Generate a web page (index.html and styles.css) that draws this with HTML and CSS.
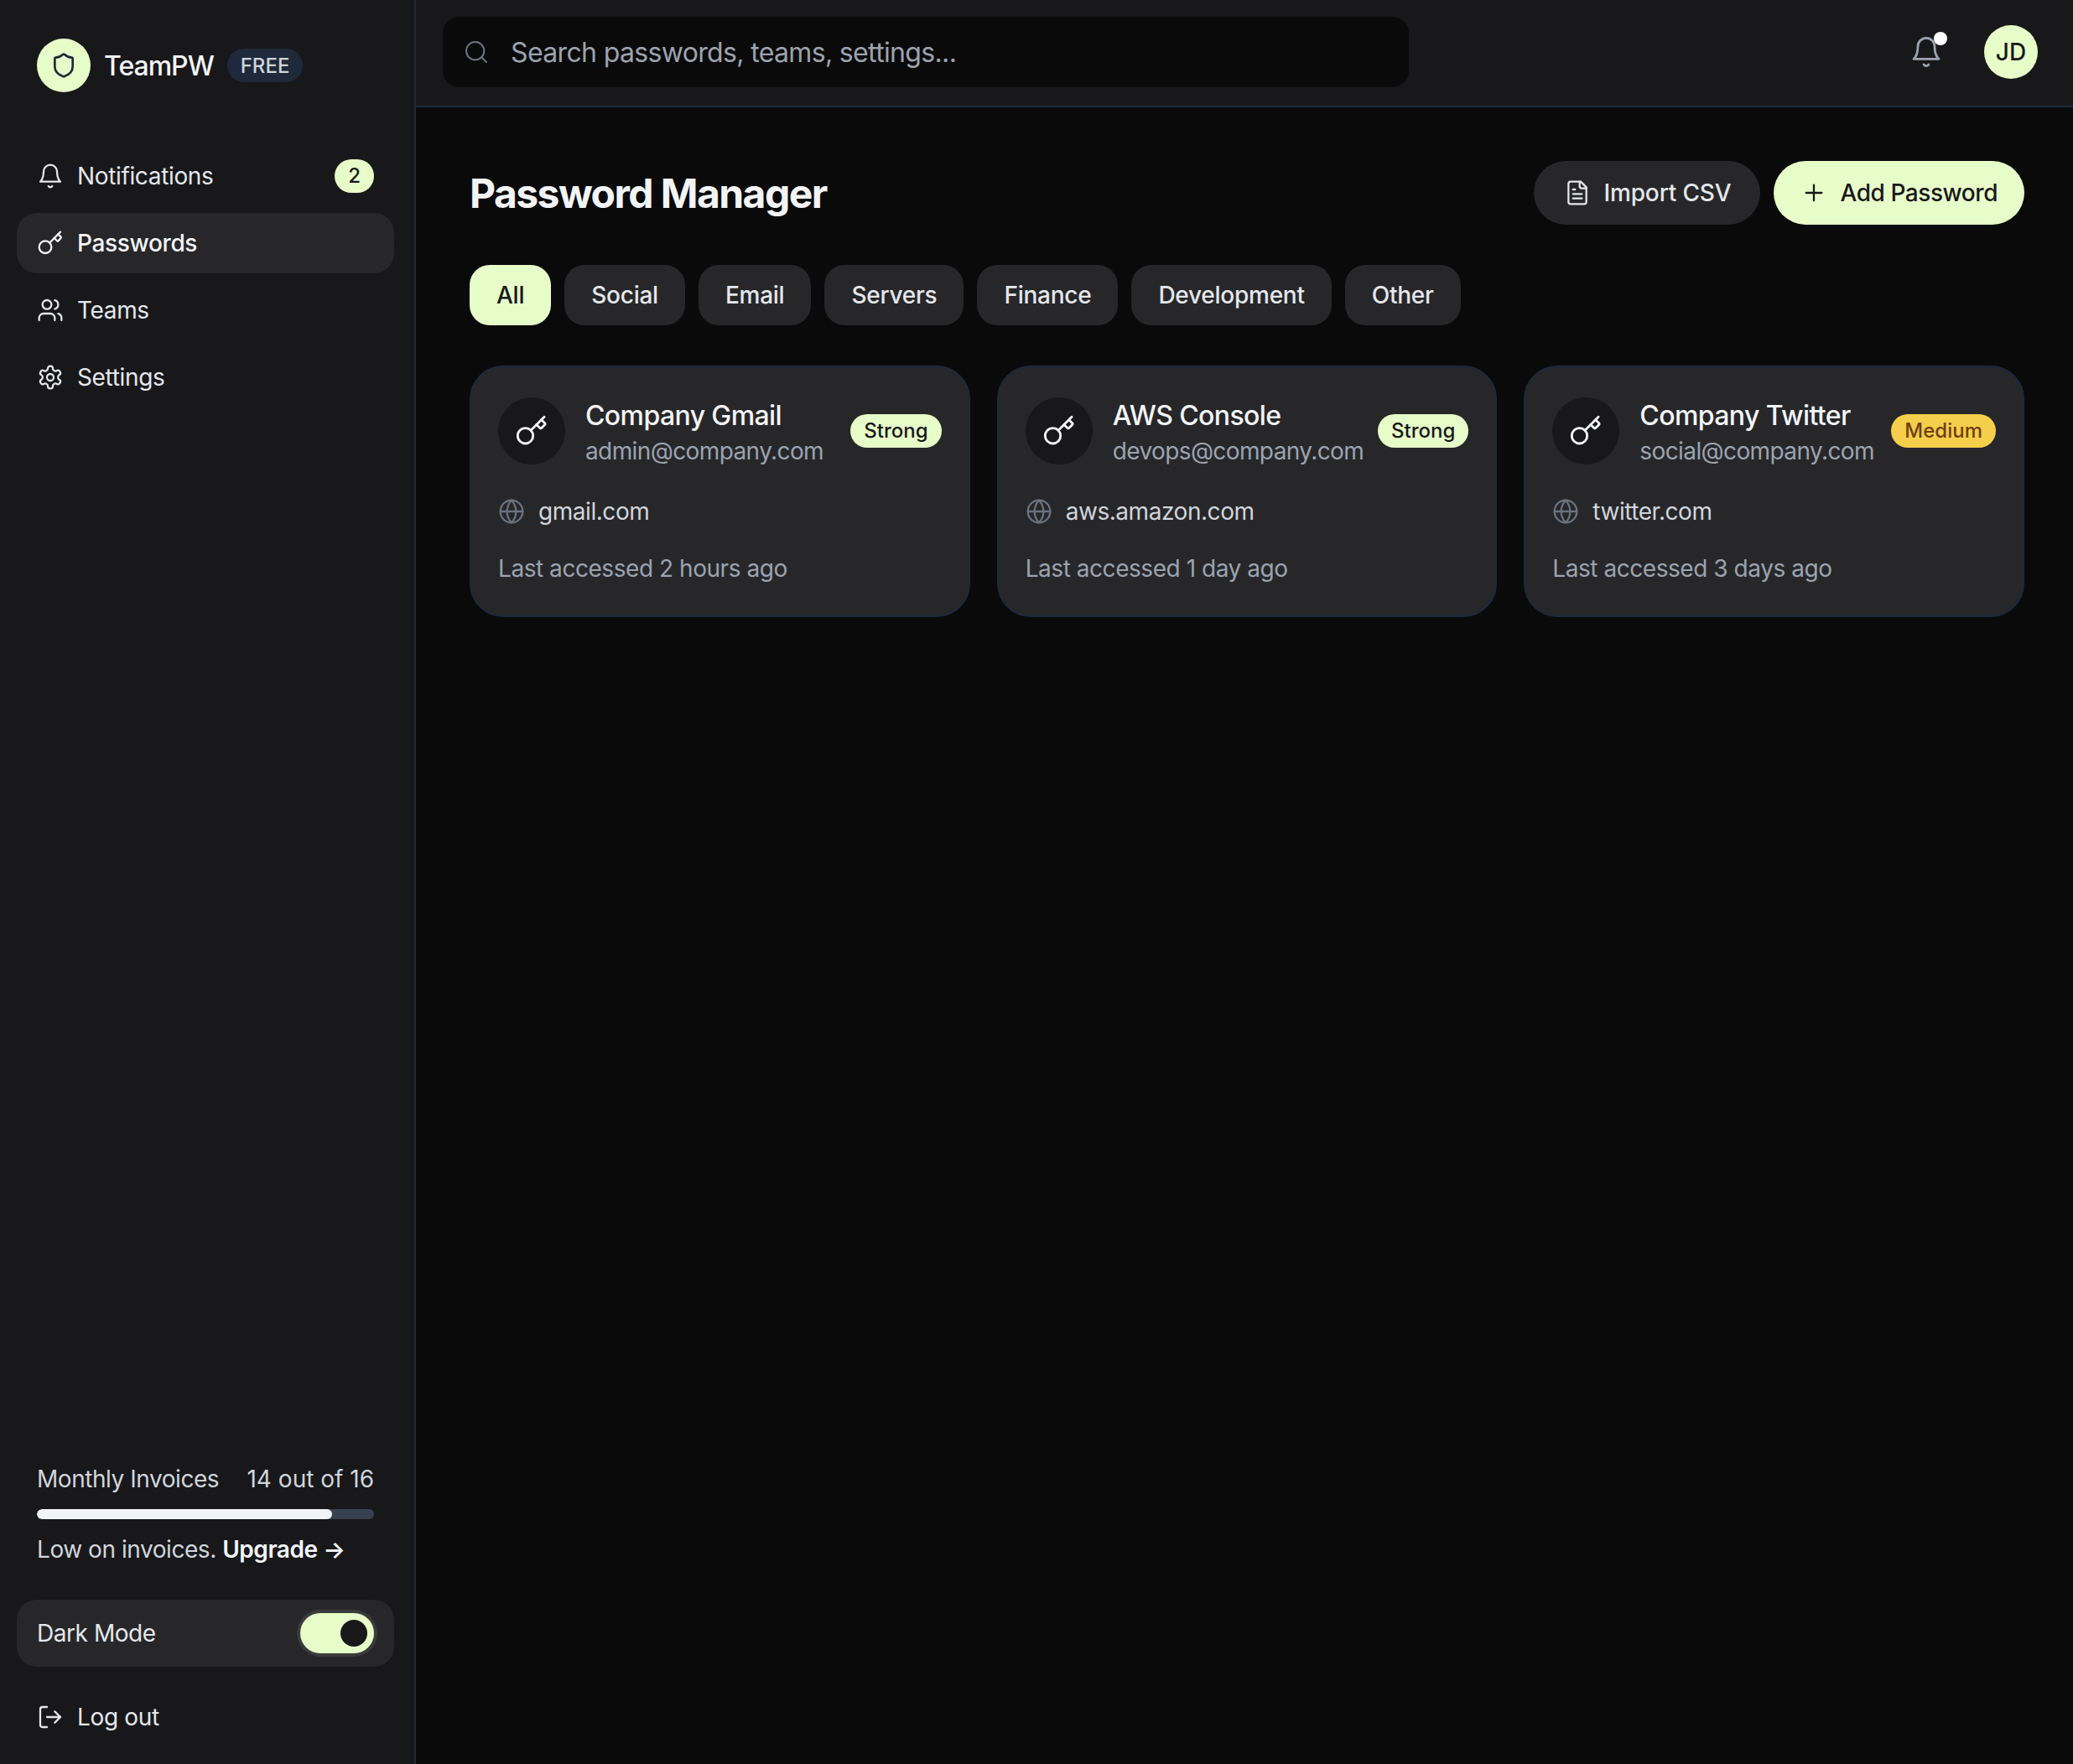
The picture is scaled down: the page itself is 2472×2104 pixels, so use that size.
FILE: index.html
```html
<!DOCTYPE html>
<html lang="en">
<head>
  <meta charset="UTF-8" />
  <title>TeamPW - Password Manager</title>
  <link rel="stylesheet" href="styles.css">
</head>
<body>
  <svg class="sprite" xmlns="http://www.w3.org/2000/svg">
    <symbol id="i-shield" viewBox="0 0 24 24"><path d="M20 13c0 5-3.5 7.5-7.66 8.95a1 1 0 0 1-.67-.01C7.5 20.5 4 18 4 13V6a1 1 0 0 1 1-1c2 0 4.5-1.2 6.24-2.72a1.17 1.17 0 0 1 1.52 0C14.51 3.81 17 5 19 5a1 1 0 0 1 1 1z"/></symbol>
    <symbol id="i-bell" viewBox="0 0 24 24"><path d="M6 8a6 6 0 0 1 12 0c0 7 3 9 3 9H3s3-2 3-9"/><path d="M10.3 21a1.94 1.94 0 0 0 3.4 0"/></symbol>
    <symbol id="i-key" viewBox="0 0 24 24"><path d="m15.5 7.5 2.3 2.3a1 1 0 0 0 1.4 0l2.1-2.1a1 1 0 0 0 0-1.4L19 4"/><path d="m21 2-9.6 9.6"/><circle cx="7.5" cy="15.5" r="5.5"/></symbol>
    <symbol id="i-users" viewBox="0 0 24 24"><path d="M16 21v-2a4 4 0 0 0-4-4H6a4 4 0 0 0-4 4v2"/><circle cx="9" cy="7" r="4"/><path d="M22 21v-2a4 4 0 0 0-3-3.87"/><path d="M16 3.13a4 4 0 0 1 0 7.75"/></symbol>
    <symbol id="i-gear" viewBox="0 0 24 24"><path d="M12.22 2h-.44a2 2 0 0 0-2 2v.18a2 2 0 0 1-1 1.73l-.43.25a2 2 0 0 1-2 0l-.15-.08a2 2 0 0 0-2.73.73l-.22.38a2 2 0 0 0 .73 2.73l.15.1a2 2 0 0 1 1 1.72v.51a2 2 0 0 1-1 1.74l-.15.09a2 2 0 0 0-.73 2.73l.22.38a2 2 0 0 0 2.73.73l.15-.08a2 2 0 0 1 2 0l.43.25a2 2 0 0 1 1 1.73V20a2 2 0 0 0 2 2h.44a2 2 0 0 0 2-2v-.18a2 2 0 0 1 1-1.73l.43-.25a2 2 0 0 1 2 0l.15.08a2 2 0 0 0 2.73-.73l.22-.39a2 2 0 0 0-.73-2.73l-.15-.08a2 2 0 0 1-1-1.74v-.5a2 2 0 0 1 1-1.74l.15-.09a2 2 0 0 0 .73-2.73l-.22-.38a2 2 0 0 0-2.73-.73l-.15.08a2 2 0 0 1-2 0l-.43-.25a2 2 0 0 1-1-1.73V4a2 2 0 0 0-2-2z"/><circle cx="12" cy="12" r="3"/></symbol>
    <symbol id="i-logout" viewBox="0 0 24 24"><path d="M9 21H5a2 2 0 0 1-2-2V5a2 2 0 0 1 2-2h4"/><path d="m16 17 5-5-5-5"/><path d="M21 12H9"/></symbol>
    <symbol id="i-search" viewBox="0 0 24 24"><circle cx="11" cy="11" r="8"/><path d="m21 21-4.3-4.3"/></symbol>
    <symbol id="i-file" viewBox="0 0 24 24"><path d="M15 2H6a2 2 0 0 0-2 2v16a2 2 0 0 0 2 2h12a2 2 0 0 0 2-2V7Z"/><path d="M14 2v4a2 2 0 0 0 2 2h4"/><path d="M10 9H8"/><path d="M16 13H8"/><path d="M16 17H8"/></symbol>
    <symbol id="i-plus" viewBox="0 0 24 24"><path d="M5 12h14"/><path d="M12 5v14"/></symbol>
    <symbol id="i-globe" viewBox="0 0 24 24"><circle cx="12" cy="12" r="10"/><path d="M12 2a14.5 14.5 0 0 0 0 20 14.5 14.5 0 0 0 0-20"/><path d="M2 12h20"/></symbol>
  </svg>

  <div class="app">
    <aside class="sidebar">
      <div class="brand">
        <div class="brand-logo"><svg class="icon"><use href="#i-shield"/></svg></div>
        <span class="brand-name">TeamPW</span>
        <span class="brand-plan">FREE</span>
      </div>

      <nav class="nav">
        <a class="nav-item"><svg class="icon"><use href="#i-bell"/></svg><span>Notifications</span><span class="nav-count">2</span></a>
        <a class="nav-item active"><svg class="icon"><use href="#i-key"/></svg><span>Passwords</span></a>
        <a class="nav-item"><svg class="icon"><use href="#i-users"/></svg><span>Teams</span></a>
        <a class="nav-item"><svg class="icon"><use href="#i-gear"/></svg><span>Settings</span></a>
      </nav>

      <div class="sidebar-bottom">
        <div class="usage">
          <div class="usage-head"><span>Monthly Invoices</span><span class="usage-count">14 out of 16</span></div>
          <div class="usage-track"><div class="usage-fill" style="width: 87.5%"></div></div>
          <p class="usage-note">Low on invoices. <strong>Upgrade →</strong></p>
        </div>

        <div class="theme-row">
          <span>Dark Mode</span>
          <div class="toggle"><div class="toggle-knob"></div></div>
        </div>

        <a class="nav-item logout"><svg class="icon"><use href="#i-logout"/></svg><span>Log out</span></a>
      </div>
    </aside>

    <div class="main">
      <header class="topbar">
        <label class="search">
          <svg class="icon"><use href="#i-search"/></svg>
          <input type="text" placeholder="Search passwords, teams, settings..." />
        </label>
        <div class="topbar-right">
          <div class="bell"><svg class="icon"><use href="#i-bell"/></svg><span class="bell-dot"></span></div>
          <div class="avatar">JD</div>
        </div>
      </header>

      <main class="content">
        <div class="page-head">
          <h1>Password Manager</h1>
          <div class="page-actions">
            <button class="btn btn-dark"><svg class="icon"><use href="#i-file"/></svg>Import CSV</button>
            <button class="btn btn-lime"><svg class="icon"><use href="#i-plus"/></svg>Add Password</button>
          </div>
        </div>

        <div class="filters">
          <button class="chip active">All</button>
          <button class="chip">Social</button>
          <button class="chip">Email</button>
          <button class="chip">Servers</button>
          <button class="chip">Finance</button>
          <button class="chip">Development</button>
          <button class="chip">Other</button>
        </div>

        <div class="cards">
          <article class="card">
            <div class="card-head">
              <div class="card-key"><svg class="icon"><use href="#i-key"/></svg></div>
              <div class="card-title">
                <h3>Company Gmail</h3>
                <p>admin@company.com</p>
              </div>
              <span class="strength strong">Strong</span>
            </div>
            <div class="card-site"><svg class="icon"><use href="#i-globe"/></svg><span>gmail.com</span></div>
            <p class="card-time">Last accessed 2 hours ago</p>
          </article>

          <article class="card">
            <div class="card-head">
              <div class="card-key"><svg class="icon"><use href="#i-key"/></svg></div>
              <div class="card-title">
                <h3>AWS Console</h3>
                <p>devops@company.com</p>
              </div>
              <span class="strength strong">Strong</span>
            </div>
            <div class="card-site"><svg class="icon"><use href="#i-globe"/></svg><span>aws.amazon.com</span></div>
            <p class="card-time">Last accessed 1 day ago</p>
          </article>

          <article class="card">
            <div class="card-head">
              <div class="card-key"><svg class="icon"><use href="#i-key"/></svg></div>
              <div class="card-title">
                <h3>Company Twitter</h3>
                <p>social@company.com</p>
              </div>
              <span class="strength medium">Medium</span>
            </div>
            <div class="card-site"><svg class="icon"><use href="#i-globe"/></svg><span>twitter.com</span></div>
            <p class="card-time">Last accessed 3 days ago</p>
          </article>
        </div>
      </main>
    </div>
  </div>
</body>
</html>
```

FILE: styles.css
```css
* {
  box-sizing: border-box;
}

body {
  margin: 0;
  font-family: Inter, 'Noto Sans', sans-serif;
  font-size: 28px;
  line-height: 40px;
  letter-spacing: -0.45px;
  background-color: #0a0a0a;
  color: #e5e7eb;
}

.sprite {
  display: none;
}

.icon {
  width: 32px;
  height: 32px;
  flex-shrink: 0;
  fill: none;
  stroke: currentColor;
  stroke-width: 1.7;
  stroke-linecap: round;
  stroke-linejoin: round;
}

.app {
  display: flex;
  height: 2104px;
}

/* sidebar */
.sidebar {
  width: 496px;
  flex-shrink: 0;
  display: flex;
  flex-direction: column;
  padding: 46px 24px 20px 20px;
  background-color: #18181b;
  border-right: 2px solid #1e293b;
}

.brand {
  display: flex;
  align-items: center;
  gap: 16px;
  padding-left: 24px;
  margin-bottom: 64px;
}

.brand-logo {
  width: 64px;
  height: 64px;
  border-radius: 50%;
  background-color: #e7fdc9;
  color: #1e293b;
  display: flex;
  align-items: center;
  justify-content: center;
}

.brand-logo .icon {
  stroke-width: 2;
}

.brand-name {
  font-size: 32px;
  line-height: 42px;
  padding-top: 2px;
  font-weight: 500;
  letter-spacing: -1px;
  color: #f3f4f6;
}

.brand-plan {
  height: 40px;
  line-height: 41px;
  padding: 0 16px;
  border-radius: 20px;
  background-color: #1e293b;
  color: #d1d5db;
  font-size: 24px;
  font-weight: 500;
  letter-spacing: 0;
}

.nav {
  display: flex;
  flex-direction: column;
  gap: 8px;
}

.nav-item {
  display: flex;
  align-items: center;
  gap: 16px;
  height: 72px;
  padding: 0 24px;
  border-radius: 24px;
  color: #e5e7eb;
  letter-spacing: -0.35px;
}

.nav-item.active {
  background-color: #27272a;
  color: #f3f4f6;
  font-weight: 500;
}

.nav-count {
  margin-left: auto;
  width: 47px;
  height: 40px;
  line-height: 40px;
  border-radius: 20px;
  text-align: center;
  background-color: #e7fdc9;
  color: #18181b;
  font-size: 24px;
  font-weight: 500;
}

.sidebar-bottom {
  margin-top: auto;
}

.usage {
  padding: 0 24px;
}

.usage-head {
  display: flex;
  justify-content: space-between;
  color: #d1d5db;
}

.usage-count {
  letter-spacing: 0;
}

.usage-track {
  height: 12px;
  margin-top: 16px;
  border-radius: 6px;
  background-color: #374151;
  overflow: hidden;
}

.usage-fill {
  height: 100%;
  border-radius: 6px;
  background-color: #f3f4f6;
}

.usage-note {
  margin: 16px 0 0;
  color: #d1d5db;
}

.usage-note strong {
  font-weight: 600;
  color: #f3f4f6;
}

.theme-row {
  display: flex;
  align-items: center;
  justify-content: space-between;
  height: 80px;
  margin-top: 40px;
  padding: 0 24px;
  border-radius: 24px;
  background-color: #27272a;
}

.toggle {
  width: 88px;
  height: 48px;
  padding: 8px;
  border-radius: 24px;
  background-color: #e7fdc9;
  box-shadow: 0 0 0 4px #3a3a3d;
  display: flex;
  justify-content: flex-end;
}

.toggle-knob {
  width: 32px;
  height: 32px;
  border-radius: 50%;
  background-color: #18181b;
}

.logout {
  margin-top: 24px;
}

/* topbar */
.main {
  flex: 1;
  min-width: 0;
  display: flex;
  flex-direction: column;
}

.topbar {
  height: 128px;
  display: flex;
  align-items: center;
  justify-content: space-between;
  padding: 20px 42px 22px 32px;
  background-color: #18181b;
  border-bottom: 2px solid #1e293b;
}

.search {
  width: 1152px;
  height: 84px;
  display: flex;
  align-items: center;
  gap: 24px;
  padding: 0 24px;
  border-radius: 20px;
  background-color: #0a0a0a;
  color: #6b7280;
}

.search .icon {
  stroke-width: 1.5;
}

.search input {
  flex: 1;
  border: none;
  outline: none;
  padding: 0 0 0 1px;
  background: transparent;
  font-family: inherit;
  font-size: 32px;
  letter-spacing: -0.65px;
  color: #e5e7eb;
}

.search input::placeholder {
  color: #9ca3af;
  opacity: 1;
}

.topbar-right {
  display: flex;
  align-items: center;
  gap: 49px;
}

.bell {
  position: relative;
  width: 40px;
  height: 40px;
  color: #9ca3af;
}

.bell .icon {
  display: block;
  width: 40px;
  height: 40px;
}

.bell-dot {
  position: absolute;
  top: -4px;
  right: -5px;
  width: 16px;
  height: 16px;
  border-radius: 50%;
  background-color: #fff;
}

.avatar {
  width: 64px;
  height: 64px;
  border-radius: 50%;
  background-color: #e7fdc9;
  color: #18181b;
  font-weight: 500;
  letter-spacing: 0;
  display: flex;
  align-items: center;
  justify-content: center;
}

/* content */
.content {
  flex: 1;
  padding: 64px 58px 64px 64px;
}

.page-head {
  display: flex;
  align-items: center;
  justify-content: space-between;
  margin-bottom: 48px;
}

h1 {
  margin: 0;
  font-size: 48px;
  line-height: 64px;
  padding-top: 2px;
  font-weight: 700;
  letter-spacing: -1.55px;
  color: #f3f4f6;
}

.page-actions {
  display: flex;
  gap: 16px;
}

button {
  border: none;
  font-family: inherit;
  font-size: 28px;
  font-weight: 500;
  letter-spacing: -0.25px;
  cursor: pointer;
}

.btn {
  height: 76px;
  display: flex;
  align-items: center;
  gap: 16px;
  padding: 0 32px;
  border-radius: 38px;
}

.btn-dark {
  padding: 0 34px 0 36px;
  background-color: #27272a;
  color: #e5e7eb;
  letter-spacing: -0.15px;
}

.btn-lime {
  background-color: #e7fdc9;
  color: #18181b;
  letter-spacing: -0.45px;
}

.filters {
  display: flex;
  gap: 16px;
  margin-bottom: 48px;
}

.chip {
  height: 72px;
  padding: 0 32px;
  border-radius: 24px;
  background-color: #27272a;
  color: #e5e7eb;
}

.chip.active {
  background-color: #e7fdc9;
  color: #18181b;
}

.cards {
  display: grid;
  grid-template-columns: repeat(3, minmax(0, 1fr));
  gap: 32px;
}

.card {
  height: 300px;
  padding: 32px;
  border: 2px solid #1e293b;
  border-radius: 40px;
  background-color: #27272a;
}

.card-head {
  display: flex;
  align-items: center;
  gap: 24px;
}

.card-key {
  width: 80px;
  height: 80px;
  flex-shrink: 0;
  border-radius: 50%;
  background-color: #18181b;
  color: #f3f4f6;
  display: flex;
  align-items: center;
  justify-content: center;
}

.card-key .icon {
  width: 40px;
  height: 40px;
}

.card-title {
  flex: 1;
  min-width: 0;
}

.card-title h3 {
  margin: 0;
  font-size: 32px;
  line-height: 48px;
  padding-top: 2px;
  margin-bottom: -2px;
  font-weight: 500;
  letter-spacing: -0.6px;
  color: #f3f4f6;
}

.card-title p {
  margin: 0;
  color: #9ca3af;
  letter-spacing: -0.6px;
}

.strength {
  height: 40px;
  line-height: 40px;
  padding: 0 16px;
  border-radius: 20px;
  font-size: 24px;
  font-weight: 500;
  letter-spacing: 0;
}

.strength.strong {
  background-color: #e7fdc9;
  color: #18181b;
}

.strength.medium {
  background-color: #f5cf4b;
  color: #713f12;
}

.card-site {
  display: flex;
  align-items: center;
  gap: 16px;
  margin-top: 32px;
  color: #d1d5db;
}

.card-site .icon {
  color: #6b7280;
}

.card-time {
  margin: 28px 0 0;
  color: #9ca3af;
}
```
